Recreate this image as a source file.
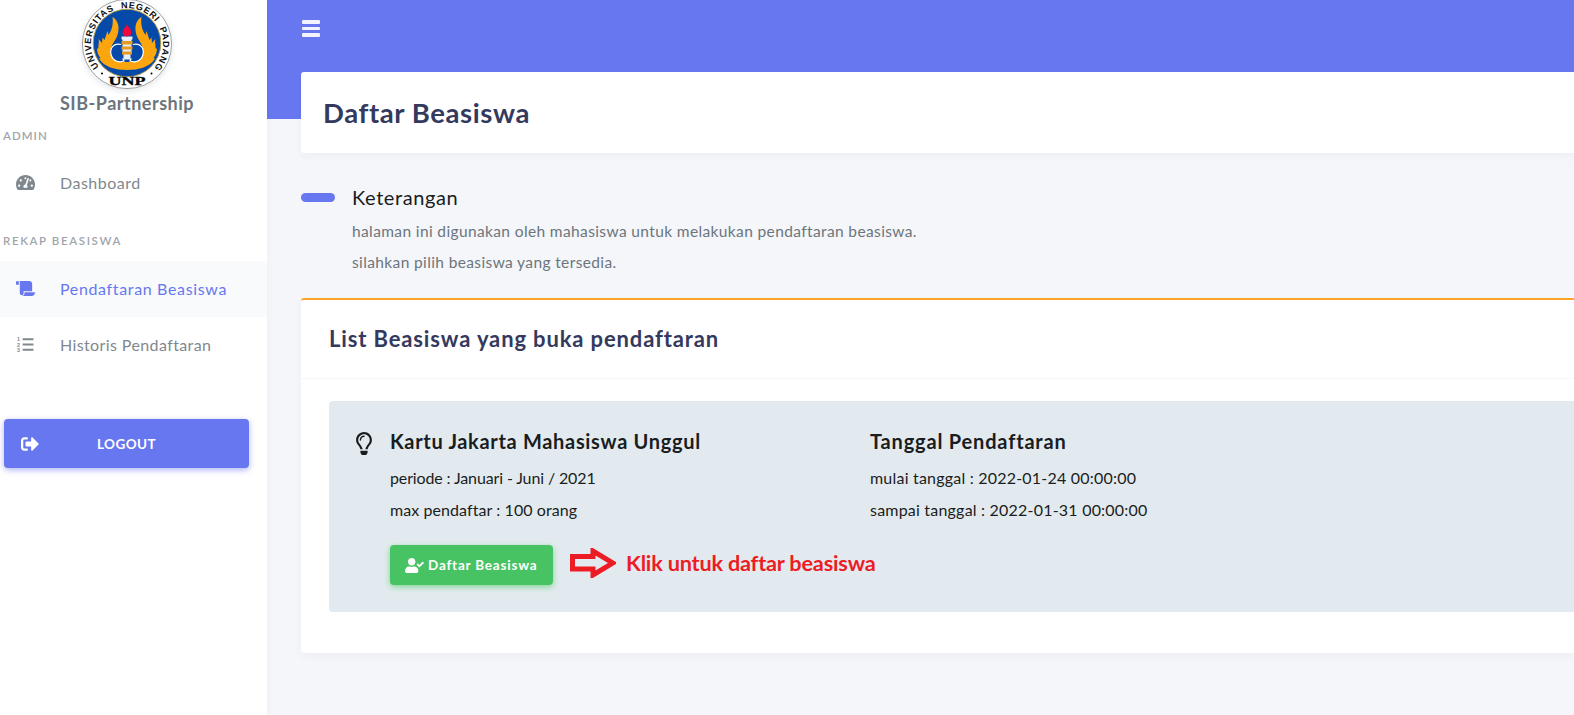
<template>
  <div class="app">
    <aside class="sidebar">
      <div class="brand">
        <svg class="logo" viewBox="0 0 90 90">
          <defs>
            <path id="ring-top" d="M17.400 68.200A36 36 0 1 1 72.600 68.200" />
          </defs>
          <circle cx="45" cy="45" r="44.600" fill="#fff" stroke="#777" stroke-width=".7" />
          <circle cx="45" cy="44" r="33.800" fill="#0549a9" stroke="#b39a4a" stroke-width="1" />
          <path d="M30.500 18C36 21 38 28 35.500 36C34 41 30 44 29 50C28 58 33 63 45 63C57 63 62 58 61 50C60 44 56 41 54.500 36C52 28 54 21 59.500 18C58.500 25 60 31 63.500 36L64.500 32L67.500 41L69.500 38.500L70 44L73.500 40C72.500 44 74 46 73.500 49L75 50C74.500 55 73 57 71.500 59L73 59.500C68 68 57 71 45 71S22 68 17 59.500L18.500 59C17 57 15.500 55 15 50L16.500 49C16 46 17.500 44 16.500 40L20 44L20.500 38.500L22.500 41L25.500 32L26.500 36C30 31 31.500 25 30.500 18Z" fill="#fca50c" />
          <path d="M39 45.500C32 43.500 27.500 49 29 55.500S37 64 42 62L41 60H49L48 62C53 64 59.500 62 61 55.500S58 43.500 51 45.500" fill="#0549a9" stroke="#fff" stroke-width="1.200" />
          <path d="M39.500 37.500h11v2.500l-1 1v13l-1 1v5h-7v-5l-1-1V41l-1-1z" fill="#e8eef8" />
          <path d="M39.500 42h11v3.500h-11zM39.500 47.500h11v3h-11zM40 52.500h10v3H40z" fill="#e59a20" />
          <path d="M45 24.500c0 3 4.300 5 4.300 8.500s-2 4.300-4.300 4.300-4.300-1-4.300-4.300 4.300-5.500 4.300-8.500z" fill="#f5063a" />
          <text class="ring"><textPath href="#ring-top" textLength="163" startOffset="0.500">UNIVERSITAS&#160; NEGERI&#160; PADANG</textPath></text>
          <circle cx="20" cy="74.500" r="1" /><circle cx="69.500" cy="74.500" r="1" />
          <text class="unp" x="45" y="86" text-anchor="middle" textLength="37" lengthAdjust="spacingAndGlyphs">UNP</text>
        </svg>
        <div class="name">SIB-Partnership</div>
      </div>
      <nav>
        <div class="section">ADMIN</div>
        <a class="item dashboard">
          <svg class="ico" viewBox="0 0 576 512"><path d="M288 32C128.940 32 0 160.940 0 320c0 52.800 14.250 102.260 39.060 144.800 5.610 9.620 16.300 15.200 27.440 15.200h443c11.140 0 21.830-5.580 27.440-15.200C561.750 422.260 576 372.800 576 320c0-159.060-128.940-288-288-288zm0 64c14.710 0 26.580 10.130 30.320 23.650-1.110 2.260-2.640 4.230-3.450 6.670l-9.220 27.670c-5.130 3.490-10.970 6.010-17.640 6.010-17.670 0-32-14.330-32-32S270.330 96 288 96zM96 384c-17.670 0-32-14.330-32-32s14.330-32 32-32 32 14.330 32 32-14.330 32-32 32zm48-160c-17.670 0-32-14.330-32-32s14.330-32 32-32 32 14.330 32 32-14.330 32-32 32zm246.770-72.410l-61.330 184C343.130 347.330 352 364.540 352 384c0 11.720-3.380 22.550-8.880 32H232.880c-5.500-9.450-8.880-20.280-8.880-32 0-33.940 26.500-61.430 59.900-63.590l61.340-184.010c4.170-12.560 17.730-19.450 30.360-15.170 12.570 4.190 19.350 17.790 15.170 30.360zm14.660 57.200l15.520-46.550c3.470-1.290 7.130-2.230 11.050-2.230 17.670 0 32 14.330 32 32s-14.330 32-32 32c-11.380-.01-20.890-6.280-26.570-15.220zM480 384c-17.670 0-32-14.330-32-32s14.330-32 32-32 32 14.330 32 32-14.330 32-32 32z" /></svg>
          <span>Dashboard</span>
        </a>
        <div class="section rekap">REKAP BEASISWA</div>
        <a class="item active">
          <svg class="ico" viewBox="0 0 640 512"><path d="M48 0C21.530 0 0 21.530 0 48v64c0 8.840 7.160 16 16 16h80V48C96 21.530 74.470 0 48 0zm208 412.570V352h288V96c0-52.940-43.060-96-96-96H111.590C121.740 13.410 128 29.920 128 48v368c0 38.870 34.650 69.650 74.750 63.120C234.220 474 256 444.460 256 412.570zM288 384v32c0 52.930-43.060 96-96 96h336c61.860 0 112-50.140 112-112 0-8.840-7.160-16-16-16H288z" /></svg>
          <span>Pendaftaran Beasiswa</span>
        </a>
        <a class="item history">
          <svg class="ico" viewBox="0 0 16 16"><path d="M5.300 2.200h10.200v1.900H5.300zM5.300 7.100h10.200V9H5.300zM5.300 12h10.200v1.900H5.300z" /><text class="num" x="0" y="5">1</text><text class="num" x="0" y="10">2</text><text class="num" x="0" y="15">3</text></svg>
          <span>Historis Pendaftaran</span>
        </a>
      </nav>
      <button class="logout">
        <svg viewBox="0 0 512 512"><path d="M497 273L329 441c-15 15-41 4.500-41-17v-96H152c-13.300 0-24-10.700-24-24v-96c0-13.300 10.700-24 24-24h136V88c0-21.400 25.900-32 41-17l168 168c9.300 9.400 9.300 24.600 0 34zM192 436v-40c0-6.600-5.400-12-12-12H96c-17.700 0-32-14.300-32-32V160c0-17.700 14.300-32 32-32h84c6.600 0 12-5.400 12-12V76c0-6.600-5.400-12-12-12H96c-53 0-96 43-96 96v192c0 53 43 96 96 96h84c6.600 0 12-5.400 12-12z" /></svg>
        <span>LOGOUT</span>
      </button>
    </aside>

    <main class="main">
      <div class="topbar"><div class="burger"><i /><i /><i /></div></div>
      <header class="title-card"><h1>Daftar Beasiswa</h1></header>
      <section class="lead">
        <div class="dash" />
        <div>
          <h2>Keterangan</h2>
          <p>halaman ini digunakan oleh mahasiswa untuk melakukan pendaftaran beasiswa.</p>
          <p>silahkan pilih beasiswa yang tersedia.</p>
        </div>
      </section>
      <section class="card">
        <div class="card-head"><h3>List Beasiswa yang buka pendaftaran</h3></div>
        <div class="alert">
          <svg class="bulb" viewBox="0 0 352 512"><path d="M176 80c-52.940 0-96 43.060-96 96 0 8.840 7.160 16 16 16s16-7.160 16-16c0-35.300 28.720-64 64-64 8.840 0 16-7.160 16-16s-7.160-16-16-16zM96.060 459.170c0 3.150.93 6.220 2.680 8.840l24.510 36.840c2.970 4.460 7.970 7.140 13.320 7.140h78.850c5.360 0 10.360-2.680 13.320-7.140l24.510-36.840c1.740-2.620 2.670-5.700 2.680-8.840l.05-43.180H96.020l.04 43.180zM176 0C73.720 0 0 82.970 0 176c0 44.370 16.450 84.850 43.560 115.780 16.640 18.990 42.740 58.800 52.420 92.160v.06h48v-.12c-.01-4.770-.72-9.510-2.150-14.070-5.590-17.810-22.820-64.710-62.170-109.610-20.530-23.430-31.520-53.150-31.610-84.140-.2-73.640 59.670-128 127.950-128 70.580 0 128 57.420 128 128 0 30.970-11.240 60.850-31.650 84.140-39.110 44.610-56.420 91.470-62.100 109.460a47.507 47.507 0 0 0-2.220 14.300v.1h48v-.05c9.680-33.370 35.780-73.180 52.420-92.160C335.550 260.850 352 220.370 352 176 352 78.800 273.200 0 176 0z" /></svg>
          <div class="col first">
            <h4>Kartu Jakarta Mahasiswa Unggul</h4>
            <p class="period">periode : Januari - Juni / 2021</p>
            <p class="quota">max pendaftar : 100 orang</p>
            <div class="actions">
              <button class="apply">
                <svg viewBox="0 0 640 512"><path d="M224 256c70.700 0 128-57.300 128-128S294.700 0 224 0 96 57.300 96 128s57.300 128 128 128zm89.600 32h-16.700c-22.200 10.200-46.900 16-72.900 16s-50.600-5.800-72.900-16h-16.700C60.200 288 0 348.200 0 422.400V464c0 26.500 21.500 48 48 48h352c26.500 0 48-21.500 48-48v-41.600c0-74.200-60.200-134.400-134.400-134.400zm323-128.400l-27.800-28.100c-4.600-4.700-12.100-4.700-16.800-.1l-104.800 104-45.500-45.800c-4.600-4.700-12.100-4.700-16.800-.1l-28.100 27.900c-4.700 4.600-4.700 12.100-.1 16.800l81.700 82.300c4.600 4.700 12.100 4.700 16.800.1l141.300-140.200c4.600-4.700 4.700-12.200.1-16.800z" /></svg>
                <span>Daftar Beasiswa</span>
              </button>
              <svg class="arrow" viewBox="0 0 46 30"><path d="M2.500 8.500H23V3L43 15 23 27V21H2.500z" /></svg>
              <span class="hint">Klik untuk daftar beasiswa</span>
            </div>
          </div>
          <div class="col dates">
            <h4>Tanggal Pendaftaran</h4>
            <p>mulai tanggal : 2022-01-24 00:00:00</p>
            <p>sampai tanggal : 2022-01-31 00:00:00</p>
          </div>
        </div>
      </section>
    </main>
  </div>
</template>

<style>
body { margin: 0; overflow: hidden; }
</style>

<style scoped>
* { box-sizing: border-box; }
.app { display: flex; width: 1574px; height: 715px; overflow: hidden; font-family: Lato, "Open Sans", sans-serif; color: #191d21; }
h1, h2, h3, h4, p { margin: 0; white-space: nowrap; }
button { border: 0; font-family: inherit; padding: 0; }
.sidebar { width: 267px; flex: none; background: #fff; box-shadow: 0 4px 8px rgba(0, 0, 0, .03); position: relative; }
.brand { width: 254px; height: 116px; display: flex; flex-direction: column; align-items: center; }
.logo { width: 90px; height: 90px; margin-top: -1px; flex: none; border-radius: 50%; overflow: visible; box-shadow: 0 2px 6px #e1e5e8; }
.ring { font: 700 9px "Liberation Sans", sans-serif; fill: #111; }
.unp { font: 700 12px "Liberation Serif", serif; fill: #000; stroke: #000; stroke-width: .3px; }
.name { font-size: 18px; font-weight: 700; line-height: 29px; letter-spacing: .5px; color: #6c757d; }
.section { height: 39px; padding-left: 3px; font-size: 11.500px; font-weight: 600; line-height: 40px; letter-spacing: 1.050px; color: #a0a5ab; }
.section.rekap { height: 50px; padding-top: 10px; letter-spacing: 1.620px; }
.item { display: flex; align-items: center; height: 56px; padding-left: 16px; font-size: 16px; color: #7f888f; }
.item span { line-height: 56px; }
.item svg { width: 19px; height: 17px; margin-right: 25px; margin-top: -2px; fill: currentColor; }
.item.dashboard { letter-spacing: .5px; }
.item.active { background: #f8fafb; color: #6777ef; letter-spacing: .65px; }
.item.history { letter-spacing: .39px; }
.num { font: 700 5px "Liberation Sans", sans-serif; }
.logout { display: flex; align-items: center; width: 245px; height: 49px; margin: 46px 0 0 4px; padding-left: 17px; border-radius: 4px; background: #6777ef; color: #fff; font-size: 13.500px; font-weight: 700; letter-spacing: .42px; box-shadow: 0 2px 6px #acb5f6; }
.logout svg { width: 18px; height: 18px; fill: #fff; margin-right: 58px; }
.main { flex: 1; padding-left: 34px; background: linear-gradient(#6777ef 119px, #f4f6f9 119px); }
.topbar { height: 72px; padding: 20px 0 0 1px; }
.burger { display: flex; flex-direction: column; gap: 3px; width: 18px; }
.burger i { height: 3.500px; border-radius: 1px; background: #f2f3fd; }
.title-card { height: 81px; padding: 20px 0 0 22px; border-radius: 3px 0 0 3px; background: #fff; box-shadow: 0 4px 8px rgba(0, 0, 0, .03); }
h1 { font-size: 27.500px; line-height: 41px; font-weight: 700; letter-spacing: .58px; color: #34395e; }
.lead { display: flex; height: 145px; padding-top: 30px; }
.dash { width: 34px; height: 9px; border-radius: 5px; margin: 10px 17px 0 0; background: #6777ef; }
h2 { height: 33px; font-size: 20px; line-height: 28px; font-weight: 400; letter-spacing: .58px; }
.lead p { font-size: 15.500px; line-height: 31px; letter-spacing: .375px; color: #6c757d; }
.card { height: 355px; border-top: 2px solid #ffa426; border-radius: 3px 0 0 3px; background: #fff; box-shadow: 0 4px 8px rgba(0, 0, 0, .03); padding-left: 28px; }
.card-head { height: 79px; margin-left: -28px; padding: 23px 0 0 28px; border-bottom: 1px solid #f7f7f8; }
h3 { font-size: 22px; line-height: 31px; font-weight: 700; letter-spacing: .86px; color: #34395e; }
.alert { display: flex; height: 211px; margin-top: 22px; border-radius: 4px 0 0 4px; background: #e3eaef; padding: 26px 0 0 27px; }
.bulb { width: 16px; height: 23px; margin: 5px 18px 0 0; fill: #191d21; }
.first { width: 480px; }
h4 { margin-bottom: 6px; font-size: 20px; line-height: 29px; font-weight: 700; letter-spacing: .68px; }
.dates h4 { letter-spacing: .82px; }
.col p { font-size: 16px; line-height: 32px; letter-spacing: .21px; }
.col .period { letter-spacing: -.13px; }
.col .quota { letter-spacing: .08px; }
.actions { display: flex; align-items: center; height: 40px; margin-top: 19px; white-space: nowrap; }
.apply { display: flex; align-items: center; width: 163px; height: 40px; flex: none; padding-left: 15px; border-radius: 4px; background: #47c363; color: #fff; font-size: 13.500px; font-weight: 700; letter-spacing: .8px; box-shadow: 0 2px 6px #81d694; }
.apply svg { width: 19px; height: 15px; flex: none; fill: #fff; margin-right: 4px; }
.arrow { width: 46px; height: 30px; flex: none; margin: -5px 10px 0 17px; fill: none; stroke: #ed1c24; stroke-width: 5; }
.hint { margin-top: -5px; color: #ed1c24; font-size: 21.700px; font-weight: 700; letter-spacing: -.2px; }
</style>
